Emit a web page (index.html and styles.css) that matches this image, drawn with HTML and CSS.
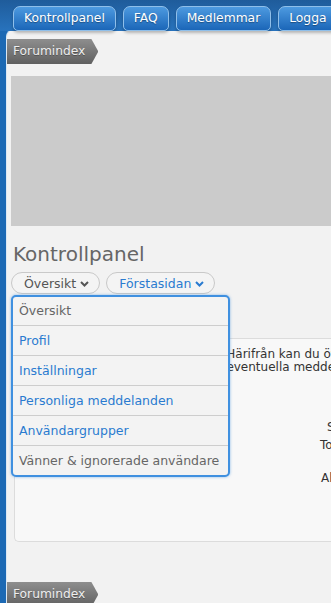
FILE: index.html
```html
<!DOCTYPE html>
<html lang="sv">
<head>
    <meta charset="UTF-8">
    <meta name="viewport" content="width=device-width, initial-scale=1.0">
    <title>Kontrollpanel</title>
    <link rel="stylesheet" href="styles.css">
</head>
<body>
    <div class="top">
        <nav class="navtabs">
            <a class="navtab" href="#">Kontrollpanel</a>
            <a class="navtab" href="#">FAQ</a>
            <a class="navtab" href="#">Medlemmar</a>
            <a class="navtab" href="#">Logga ut</a>
        </nav>
    </div>

    <div class="wrap">
        <div class="crumbs">
            <a class="crumb" href="#">Forumindex</a>
        </div>

        <div class="banner"></div>

        <h2 class="page-title">Kontrollpanel</h2>

        <div class="ucp-tabs">
            <div class="pill-holder">
                <button class="pill">Översikt
                    <svg class="chev" width="9" height="6" viewBox="0 0 9 6"><path d="M1 1l3.5 3.5L8 1" fill="none" stroke="currentColor" stroke-width="2"/></svg>
                </button>
                <ul class="dropdown">
                    <li class="current">Översikt</li>
                    <li><a href="#">Profil</a></li>
                    <li><a href="#">Inställningar</a></li>
                    <li><a href="#">Personliga meddelanden</a></li>
                    <li><a href="#">Användargrupper</a></li>
                    <li class="current">Vänner &amp; ignorerade användare</li>
                </ul>
            </div>
            <button class="pill active">Förstasidan
                <svg class="chev" width="9" height="6" viewBox="0 0 9 6"><path d="M1 1l3.5 3.5L8 1" fill="none" stroke="currentColor" stroke-width="2"/></svg>
            </button>
        </div>

        <div class="panel">
            <p class="intro">
                <span class="line">Välkommen till kontrollpanelen. Härifrån kan du övervaka, visa och uppdatera din profil.</span>
                <span class="line">Du kan också läsa alla dina nya eventuella meddelanden innan du fortsätter.</span>
            </p>
            <div class="stats">
                <div class="stat s1">Senaste besök:</div>
                <div class="stat s2">Totalt antal inlägg:</div>
                <div class="stat s3">Alla ämnen:</div>
            </div>
        </div>

        <div class="crumbs bottom">
            <a class="crumb" href="#">Forumindex</a>
        </div>
    </div>
</body>
</html>
```

FILE: styles.css
```css
body {
    margin: 0;
    font-family: 'DejaVu Sans', Verdana, sans-serif;
    background-color: #1c69b4;
    overflow: hidden;
}

.top {
    background: linear-gradient(#1f5c9b, #2873bd);
    padding: 6px 0 0 13px;
    position: relative;
    z-index: 2;
    margin-bottom: -2px;
}

.navtabs {
    display: flex;
    gap: 7px;
    white-space: nowrap;
}

.navtab {
    display: block;
    height: 23px;
    line-height: 23px;
    padding: 0 10px;
    font-size: 12.3px;
    color: #fff;
    text-decoration: none;
    text-shadow: 0 1px 1px rgba(0, 0, 0, 0.35);
    background: linear-gradient(#4d9ae0, #1b66b8);
    border: 1px solid #8fbfea;
    border-radius: 7px 7px 5px 5px;
    box-shadow: 0 2px 3px rgba(0, 0, 0, 0.25);
}

.wrap {
    margin-left: 6px;
    background-color: #f2f2f2;
    border-left: 1px solid #dbe8f4;
    border-top: 1px solid #e8eef5;
    border-top-left-radius: 8px;
    padding: 9px 0 30px 4px;
    min-height: 700px;
}

.crumbs {
    margin-left: -4px;
}

.crumbs.bottom {
    margin-top: 40px;
}

.crumb {
    display: inline-block;
    height: 25px;
    line-height: 25px;
    padding: 0 13px 0 6px;
    font-size: 12.25px;
    color: #eee;
    text-decoration: none;
    text-shadow: 0 1px 0 rgba(0, 0, 0, 0.3);
    background: linear-gradient(#8e8e8e, #606060);
    clip-path: polygon(0 0, calc(100% - 7px) 0, 100% 50%, calc(100% - 7px) 100%, 0 100%);
}

.banner {
    margin-top: 12px;
    height: 150px;
    background-color: #cbcbcb;
}

.page-title {
    margin: 16px 0 0 2px;
    font-size: 20px;
    line-height: 24px;
    font-weight: normal;
    color: #666;
}

.ucp-tabs {
    display: flex;
    gap: 6px;
    margin-top: 6px;
    position: relative;
    z-index: 3;
}

.pill-holder {
    position: relative;
}

.pill {
    height: 22px;
    padding: 0 10px 0 12px;
    font-family: inherit;
    font-size: 12.5px;
    color: #555;
    background-color: #f4f4f4;
    border: 1px solid #c9c9c9;
    border-radius: 11px;
    display: flex;
    align-items: center;
    gap: 4px;
    cursor: pointer;
}

.pill.active {
    color: #2a7bd0;
}

.chev {
    margin-top: 1px;
}

.dropdown {
    position: absolute;
    top: calc(100% + 1px);
    left: 0;
    width: 215px;
    margin: 0;
    padding: 0;
    list-style: none;
    background-color: #f3f3f3;
    border: 2px solid #3f90e0;
    border-radius: 5px;
    box-shadow: 0 0 3px rgba(63, 144, 224, 0.6);
}

.dropdown li {
    height: 29px;
    line-height: 29px;
    padding: 0 6px;
    font-size: 12.5px;
    color: #666;
    border-top: 1px solid #cdcdcd;
    white-space: nowrap;
}

.dropdown li:first-child {
    border-top: none;
    height: 28px;
    line-height: 28px;
}

.dropdown a {
    color: #2a7bd0;
    text-decoration: none;
}

.panel {
    margin: 44px 0 0 3px;
    height: 193px;
    padding: 9px 0 0 18px;
    background-color: #f8f8f8;
    border: 1px solid #dcdcdc;
    border-right: none;
    border-radius: 5px 0 0 5px;
    overflow: hidden;
    font-size: 12px;
    color: #333;
}

.intro {
    margin: 0;
    line-height: 13px;
    white-space: nowrap;
}

.intro .line {
    display: block;
}

.stats {
    margin-top: 44px;
    white-space: nowrap;
    line-height: 18px;
}

.s1 { padding-left: 294px; }
.s2 { padding-left: 287px; }
.s3 { padding-left: 288px; margin-top: 15px; }
```
